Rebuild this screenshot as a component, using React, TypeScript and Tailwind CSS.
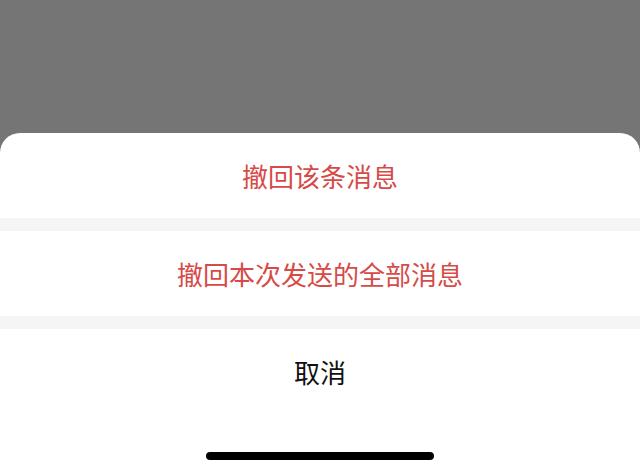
export default function App() {
  return (
    <div
      className="w-[640px] h-[473px] bg-[#757575] flex flex-col overflow-hidden"
      style={{ fontFamily: '"Noto Sans CJK SC", "Noto Sans", sans-serif' }}
    >
      <div className="h-[133px] shrink-0" />
      <div className="flex-1 bg-white rounded-t-[20px] flex flex-col overflow-hidden">
        <button className="h-[85px] shrink-0 flex items-center justify-center text-[26px] text-[#d64a47]">
          撤回该条消息
        </button>
        <div className="h-[13px] shrink-0 bg-[#f5f5f5]" />
        <button className="h-[85px] shrink-0 flex items-center justify-center text-[26px] text-[#d64a47]">
          撤回本次发送的全部消息
        </button>
        <div className="h-[13px] shrink-0 bg-[#f5f5f5]" />
        <button className="h-[85px] shrink-0 flex items-center justify-center text-[26px] text-[#111111]">
          取消
        </button>
        <div className="flex-1 flex justify-center pt-[38px]">
          <div className="w-[228px] h-[8px] rounded-full bg-black" />
        </div>
      </div>
    </div>
  );
}
